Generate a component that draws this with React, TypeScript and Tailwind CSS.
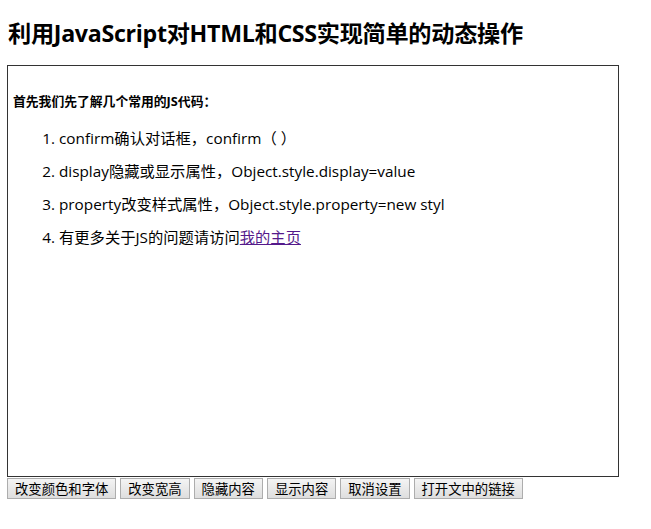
const font = { fontFamily: '"Open Sans", "Noto Sans CJK SC", sans-serif' };

const items = [
  "confirm确认对话框，confirm（ ）",
  "display隐藏或显示属性，Object.style.display=value",
  "property改变样式属性，Object.style.property=new styl",
];

const buttons = ["改变颜色和字体", "改变宽高", "隐藏内容", "显示内容", "取消设置", "打开文中的链接"];

export default function App() {
  return (
    <div className="min-h-[529px] bg-white px-[7px] text-black" style={font}>
      <h1 className="mt-[15px] pl-[1px] text-[23.2px] font-bold leading-[36px] tracking-[-0.3px]">
        利用JavaScript对HTML和CSS实现简单的动态操作
      </h1>

      <div className="mt-[14px] h-[412px] w-[612px] border border-[#333]">
        <p className="pl-[5px] pt-[26px] text-[12.8px] font-bold leading-[18px]">
          首先我们先了解几个常用的JS代码：
        </p>
        <ol className="mt-[12px] list-outside list-decimal pl-[51px] text-[15.3px] leading-[33px]">
          {items.map((t) => (
            <li key={t}>{t}</li>
          ))}
          <li>
            有更多关于JS的问题请访问
            <a href="#" className="text-[#551a8b] underline">
              我的主页
            </a>
          </li>
        </ol>
      </div>

      <div className="mt-[1px] flex gap-[4px]">
        {buttons.map((b) => (
          <button
            key={b}
            className="h-[21px] border border-[#adadad] bg-gradient-to-b from-[#f4f4f4] to-[#dedede] px-[7px] text-[13.33px] leading-[19px] text-black"
            style={{ fontFamily: '"Noto Sans CJK SC", sans-serif' }}
          >
            {b}
          </button>
        ))}
      </div>
    </div>
  );
}
